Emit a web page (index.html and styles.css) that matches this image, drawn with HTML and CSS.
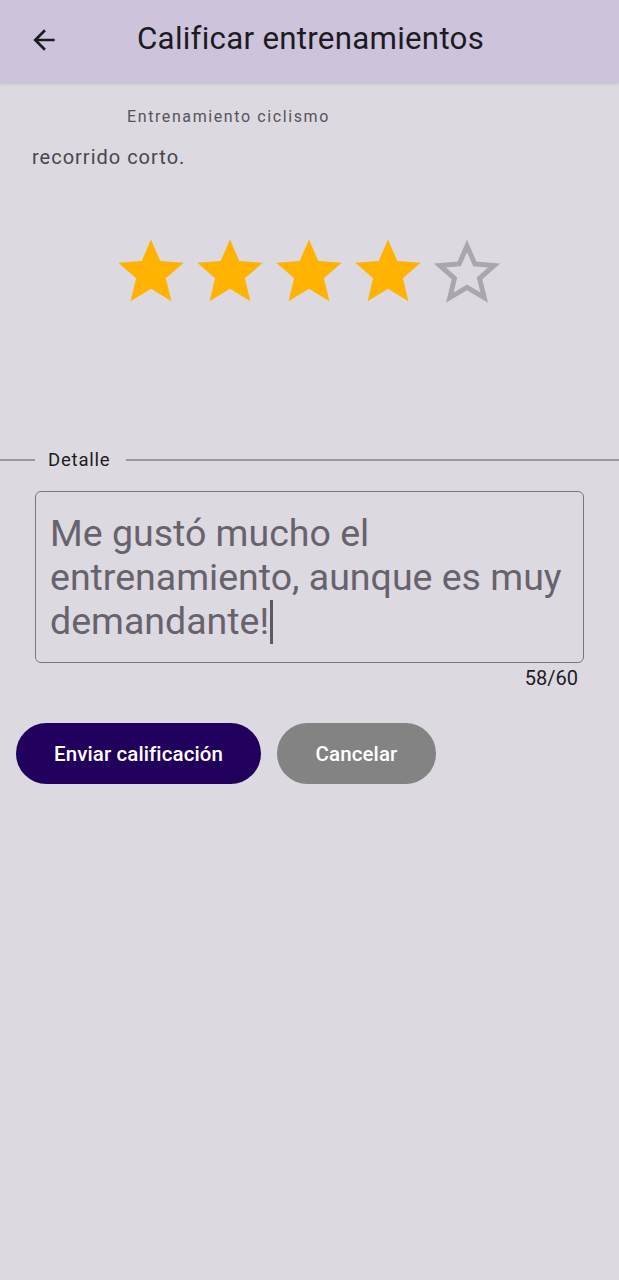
FILE: index.html
```html
<!DOCTYPE html>
<html lang="es">
<head>
<meta charset="utf-8">
<link rel="stylesheet" href="styles.css">
</head>
<body>
<header class="appbar">
  <svg class="back" viewBox="0 0 24 24" width="32" height="32"><path d="M20 11H7.83l5.59-5.59L12 4l-8 8 8 8 1.41-1.41L7.83 13H20v-2z" fill="#1c1b1f"/></svg>
  <h1 class="title">Calificar entrenamientos</h1>
</header>
<main class="content">
  <p class="subtitle">Entrenamiento ciclismo</p>
  <p class="desc">recorrido corto.</p>
  <div class="stars">
    <svg class="star" viewBox="0 0 24 24"><path d="M12 1.2l3.2 7.4 8 .6-6.1 5.3 1.9 7.9L12 18.1l-7 4.3 1.9-7.9L.8 9.2l8-.6z" fill="#ffb300"/></svg>
    <svg class="star" viewBox="0 0 24 24"><path d="M12 1.2l3.2 7.4 8 .6-6.1 5.3 1.9 7.9L12 18.1l-7 4.3 1.9-7.9L.8 9.2l8-.6z" fill="#ffb300"/></svg>
    <svg class="star" viewBox="0 0 24 24"><path d="M12 1.2l3.2 7.4 8 .6-6.1 5.3 1.9 7.9L12 18.1l-7 4.3 1.9-7.9L.8 9.2l8-.6z" fill="#ffb300"/></svg>
    <svg class="star" viewBox="0 0 24 24"><path d="M12 1.2l3.2 7.4 8 .6-6.1 5.3 1.9 7.9L12 18.1l-7 4.3 1.9-7.9L.8 9.2l8-.6z" fill="#ffb300"/></svg>
    <svg class="star" viewBox="0 0 24 24"><path d="M12 3.4l2.7 6.2 6.6.5-5 4.4 1.6 6.6L12 17.6l-5.9 3.5 1.6-6.6-5-4.4 6.6-.5z" fill="none" stroke="#a9a7ab" stroke-width="1.7" stroke-linejoin="miter"/></svg>
  </div>
  <div class="divider">
    <span class="line short"></span>
    <span class="divider-label">Detalle</span>
    <span class="line long"></span>
  </div>
  <div class="field">
    <div class="textbox">Me gustó mucho el entrenamiento, aunque es muy demandante!<span class="cursor"></span></div>
    <div class="counter">58/60</div>
  </div>
  <div class="actions">
    <button class="btn primary">Enviar calificación</button>
    <button class="btn secondary">Cancelar</button>
  </div>
</main>
</body>
</html>
```

FILE: styles.css
```css
* { box-sizing: border-box; }
html, body { margin: 0; padding: 0; }
body {
  background: #ddd9e1;
  font-family: Roboto, "Noto Sans", sans-serif;
  color: #1c1b1f;
  width: 619px;
  min-height: 1280px;
}
.appbar {
  height: 83px;
  background: #cdc4dc;
  display: flex;
  align-items: center;
  padding-left: 28px;
  box-shadow: 0 1px 3px rgba(0,0,0,0.12);
}
.back { flex: none; margin-top: -4px; }
.title {
  margin: -7px 0 0 77px;
  font-size: 31.3px;
  font-weight: 400;
  color: #1c1b1f;
  letter-spacing: 0.25px;
}
.content { display: flex; flex-direction: column; }
.subtitle {
  margin: 24px 0 0 127px;
  font-size: 16px;
  letter-spacing: 1.6px;
  color: #57535c;
  line-height: 20px;
}
.desc {
  margin: 18px 0 0 32px;
  font-size: 20px;
  letter-spacing: 1px;
  color: #4a4650;
  line-height: 24px;
}
.stars {
  margin: 67px 0 0 116px;
  display: flex;
  gap: 9px;
}
.star { width: 70px; height: 70px; }
.divider {
  margin-top: 142px;
  display: flex;
  align-items: center;
  height: 24px;
}
.line { height: 1.5px; background: #9a969e; }
.line.short { width: 35px; }
.line.long { flex: 1; }
.divider-label {
  padding: 0 16px 0 13px;
  font-size: 18.5px;
  letter-spacing: 0.8px;
  color: #1c1b1f;
}
.field { margin: 19px 35px 0 35px; }
.textbox {
  border: 1.5px solid #7a7580;
  border-radius: 6px;
  height: 172px;
  padding: 19px 14px 0 14px;
  font-size: 37.5px;
  line-height: 44px;
  color: #67626c;
}
.cursor {
  display: inline-block;
  width: 2.5px;
  height: 44px;
  background: #5e5a63;
  vertical-align: -10px;
  margin-left: 1px;
}
.counter {
  text-align: right;
  font-size: 20px;
  padding-right: 6px;
  margin-top: 3px;
  line-height: 24px;
  color: #1c1b1f;
}
.actions {
  margin: 33px 0 0 16px;
  display: flex;
  gap: 16px;
}
.btn {
  height: 61px;
  border: none;
  border-radius: 31px;
  font-family: Roboto, "Noto Sans", sans-serif;
  font-size: 20.5px;
  font-weight: 500;
  color: #fff;
  letter-spacing: 0.1px;
}
.primary { width: 245px; background: #21005d; }
.secondary { width: 159px; background: #838383; }
```
